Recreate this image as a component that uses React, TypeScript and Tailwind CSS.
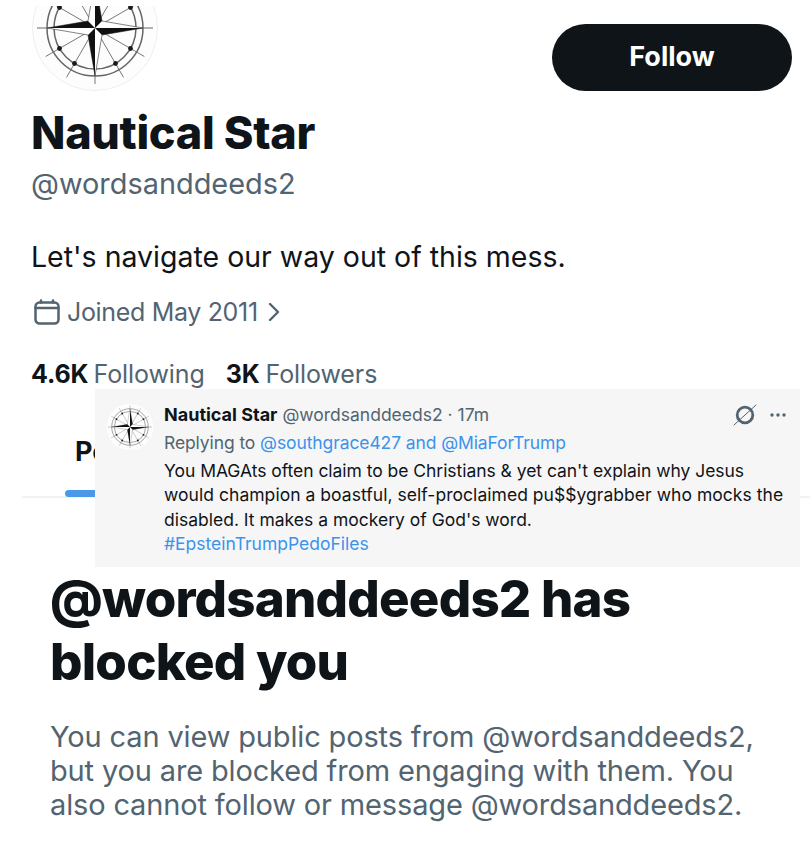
import React from "react";

function Compass({ size, className }: { size: number; className?: string }) {
  const spokes = [30, 60, 120, 150, 210, 240, 300, 330];
  return (
    <svg width={size} height={size} viewBox="-63 -63 126 126" className={className}>
      <circle cx="0" cy="0" r="62.5" fill="#fdfdfd" stroke="#efefef" strokeWidth="1" />
      <circle cx="0" cy="0" r="48" fill="none" stroke="#666" strokeWidth="1.5" />
      <circle cx="0" cy="0" r="41" fill="none" stroke="#666" strokeWidth="1.5" />
      <line x1="-58" y1="0" x2="58" y2="0" stroke="#666" strokeWidth="1" />
      <line x1="0" y1="-57" x2="0" y2="56" stroke="#777" strokeWidth="1" />
      {spokes.map((a) => {
        const r = (a * Math.PI) / 180;
        const x = Math.sin(r);
        const y = -Math.cos(r);
        return (
          <g key={a}>
            <line x1={x * 6} y1={y * 6} x2={x * 57} y2={y * 57} stroke="#777" strokeWidth="1" />
            <circle cx={x * 41} cy={y * 41} r="2.4" fill="#1a1a1a" />
          </g>
        );
      })}
      <path d="M0 -48 L7 -7 L48 0 L7 7 L0 48 L-7 7 L-48 0 L-7 -7 Z" fill="#fff" stroke="#333" strokeWidth="0.6" />
      <path d="M0 -48 L7 -7 L0 0 Z M48 0 L7 7 L0 0 Z M0 48 L-7 7 L0 0 Z M-48 0 L-7 -7 L0 0 Z" fill="#111" />
    </svg>
  );
}

export default function App() {
  return (
    <div className="relative w-[810px] h-[848px] overflow-hidden bg-white text-[#0f1419] font-['Inter','Liberation_Sans',sans-serif]">
      <div className="h-[91px] flex justify-between items-end pl-[32px] pr-[18px]">
        <div className="h-[85px] w-[126px] overflow-hidden flex items-end">
          <Compass size={126} className="shrink-0" />
        </div>
        <div className="w-[240px] h-[67px] rounded-full bg-[#0f1419] text-white flex items-center justify-center text-[27px] font-bold">
          Follow
        </div>
      </div>

      <div className="pl-[32px]">
        <div className="mt-[14px] text-[45px] leading-[56px] font-extrabold tracking-[-0.32px] ml-[-1px]">Nautical Star</div>
        <div className="mt-[6px] text-[28.9px] leading-[34px] text-[#536471] ml-[-1px]">@wordsanddeeds2</div>
        <div className="mt-[39px] text-[28.5px] leading-[34px] ml-[-1px]">Let's navigate our way out of this mess.</div>
        <div className="mt-[21px] flex items-center text-[#536471] text-[25px] tracking-[-0.33px] leading-[34px]">
          <svg width="26" height="26" viewBox="0 0 26 26" fill="none" stroke="#536471" strokeWidth="2.5" strokeLinecap="round" className="ml-[2px] mr-[7px]">
            <rect x="1.5" y="3.5" width="23" height="21" rx="4" />
            <path d="M1.5 9h23M7 1.5v2M19 1.5v2" />
          </svg>
          <span>Joined May 2011</span>
          <svg width="12" height="20" viewBox="0 0 12 20" fill="none" stroke="#536471" strokeWidth="2.4" strokeLinecap="round" strokeLinejoin="round" className="ml-[10px]">
            <path d="M2 2l8 8-8 8" />
          </svg>
        </div>
        <div className="mt-[28px] ml-[-1px] flex text-[25px] tracking-[-0.1px] leading-[34px] text-[#536471]">
          <span className="font-bold text-[#0f1419]">4.6K</span>
          <span className="ml-[5px]">Following</span>
          <span className="ml-[21px] font-bold text-[#0f1419]">3K</span>
          <span className="ml-[6px]">Followers</span>
        </div>
        <div className="mt-[44px] text-[27px] leading-[34px] font-bold ml-[43px]">Posts</div>
      </div>

      <div className="relative mt-[27px] ml-[22px] h-[2px] bg-[#eff3f4]">
        <div className="absolute left-[43px] top-[-6px] w-[120px] h-[7px] rounded-full bg-[#4a99e9]" />
      </div>

      <div className="pl-[50px] mt-[69px]">
        <div className="text-[51px] leading-[63px] font-extrabold tracking-[-0.8px]">
          @wordsanddeeds2 has
          <br />
          blocked you
        </div>
        <div className="mt-[27px] text-[29px] tracking-[-0.15px] leading-[34px] text-[#536471]">
          You can view public posts from @wordsanddeeds2,
          <br />
          but you are blocked from engaging with them. You
          <br />
          also cannot follow or message @wordsanddeeds2.
        </div>
      </div>

      <div className="absolute left-[95px] top-[389px] w-[705px] h-[178px] bg-[#f6f6f6] flex pl-[11px] pt-[14px]">
        <Compass size={48} className="shrink-0" />
        <div className="relative ml-[10px] flex-1 text-[17.5px] leading-[24.4px]">
          <div className="text-[#536471]">
            <span className="font-bold text-[18px] text-[#0f1419]">Nautical Star</span> @wordsanddeeds2 · 17m
          </div>
          <div className="mt-[3.6px] text-[#536471] tracking-[-0.1px]">
            Replying to <span className="text-[#3a93ec]">@southgrace427 and @MiaForTrump</span>
          </div>
          <div className="mt-[3.4px] text-[#0f1419]">
            <span className="tracking-[-0.04px]">You MAGAts often claim to be Christians &amp; yet can't explain why Jesus</span>
            <br />
            <span className="tracking-[0.04px]">would champion a boastful, self-proclaimed pu$$ygrabber who mocks the</span>
            <br />
            disabled. It makes a mockery of God's word.
          </div>
          <div className="text-[#3a93ec]">#EpsteinTrumpPedoFiles</div>
          <div className="absolute right-[13px] top-[1px] flex items-center gap-[12px]">
            <svg width="24" height="22" viewBox="0 0 24 22" fill="none" stroke="#536471" strokeLinecap="round">
              <circle cx="12" cy="11" r="7.8" strokeWidth="2.8" />
              <path d="M23 1L1 21" strokeWidth="1" />
            </svg>
            <svg width="18" height="6" viewBox="0 0 18 6" fill="#536471">
              <circle cx="3" cy="3" r="1.7" />
              <circle cx="9" cy="3" r="1.7" />
              <circle cx="15" cy="3" r="1.7" />
            </svg>
          </div>
        </div>
      </div>
    </div>
  );
}
